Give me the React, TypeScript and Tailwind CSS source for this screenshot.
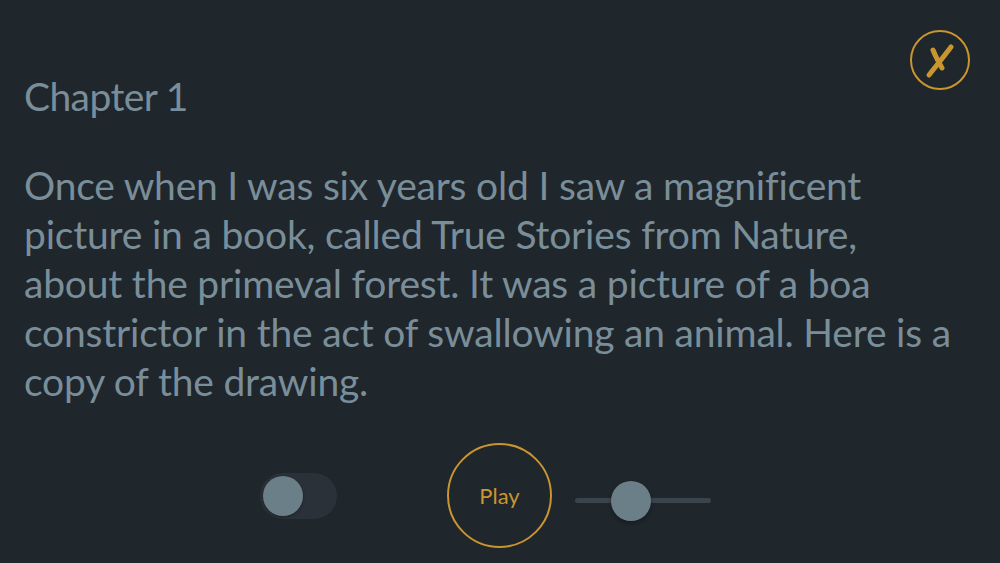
import { useState } from 'react';

const lines = [
  'Once when I was six years old I saw a magnificent',
  'picture in a book, called True Stories from Nature,',
  'about the primeval forest. It was a picture of a boa',
  'constrictor in the act of swallowing an animal. Here is a',
  'copy of the drawing.',
];

function CloseButton() {
  return (
    <button className="absolute top-[30px] right-[30px] flex h-[60px] w-[60px] items-center justify-center rounded-full border-[2.5px] border-[#c9952f]">
      <svg width="34" height="38" viewBox="0 0 34 38" fill="none">
        {/* short stroke, top-left to lower-right */}
        <path
          d="M10 9 C 12 14, 15 20, 19 27"
          stroke="#c9952f"
          strokeWidth="5"
          strokeLinecap="round"
        />
        {/* long stroke, top-right to bottom-left */}
        <path
          d="M28 6 C 22 14, 14 24, 6 34"
          stroke="#c9952f"
          strokeWidth="5"
          strokeLinecap="round"
        />
      </svg>
    </button>
  );
}

function Toggle() {
  const [on, setOn] = useState(false);
  return (
    <button
      onClick={() => setOn(!on)}
      className="flex h-[46px] w-[77px] items-center rounded-full bg-[#2a3138] px-[3px]"
    >
      <span
        className={
          on
            ? 'ml-auto h-[40px] w-[40px] rounded-full bg-[#6b7f89] shadow-[0_1px_3px_rgba(0,0,0,0.35)]'
            : 'h-[40px] w-[40px] rounded-full bg-[#6b7f89] shadow-[0_1px_3px_rgba(0,0,0,0.35)]'
        }
      />
    </button>
  );
}

function Slider() {
  return (
    <div className="relative mt-[10px] flex h-[40px] w-[136px] items-center">
      <div className="h-[5px] w-full rounded-full bg-[#3a444c]" />
      <div className="absolute left-[36px] top-0 h-[40px] w-[40px] rounded-full bg-[#6b7f89] shadow-[0_2px_4px_rgba(0,0,0,0.3)]" />
    </div>
  );
}

export default function App() {
  return (
    <div
      className="relative h-[563px] w-full overflow-hidden bg-[#1f262c] text-[#7a8e9a]"
      style={{ fontFamily: 'Lato, "Open Sans", sans-serif' }}
    >
      <CloseButton />

      <div className="px-[24px] pt-[72px]">
        <h1 className="text-[39px] leading-[49px] tracking-[-0.6px]">Chapter 1</h1>

        <p className="mt-[40px] whitespace-nowrap text-[39px] leading-[49px] tracking-[-0.2px]">
          {lines.map((line, i) => (
            <span key={i} className="block">
              {line}
            </span>
          ))}
        </p>
      </div>

      <div className="mt-[37px] flex items-center pl-[260px]">
        <Toggle />
        <button className="ml-[110px] flex h-[105px] w-[105px] items-center justify-center rounded-full border-[2.5px] border-[#c9952f] text-[22px] text-[#c9952f]">
          Play
        </button>
        <div className="ml-[23px]">
          <Slider />
        </div>
      </div>
    </div>
  );
}
